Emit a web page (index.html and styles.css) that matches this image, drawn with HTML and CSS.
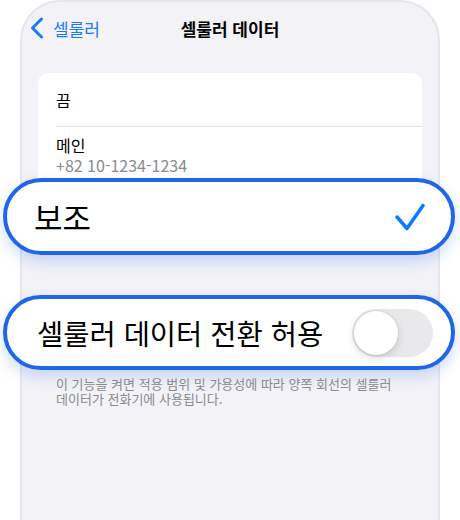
FILE: index.html
```html
<!DOCTYPE html>
<html lang="ko">
<head>
    <meta charset="UTF-8">
    <meta name="viewport" content="width=device-width, initial-scale=1.0">
    <title>셀룰러 데이터</title>
    <link rel="stylesheet" href="styles.css">
</head>
<body>
    <div class="phone">
        <div class="nav">
            <a class="back" href="#">
                <svg class="chevron" width="14" height="22" viewBox="0 0 14 22">
                    <polyline points="11.5,2 2.5,11 11.5,20" fill="none" stroke="#1a7cf5" stroke-width="3" stroke-linecap="round" stroke-linejoin="round"/>
                </svg>
                셀룰러
            </a>
            <div class="title">셀룰러 데이터</div>
            <div></div>
        </div>

        <div class="group">
            <div class="row">끔</div>
            <div class="row row-line">
                <div>메인</div>
                <div class="sub">+82 10-1234-1234</div>
            </div>
            <div class="pill pill-check">
                <span>보조</span>
                <svg width="30" height="28" viewBox="0 0 30 28">
                    <polyline points="2,14 12,25.5 28,2.5" fill="none" stroke="#0a7aff" stroke-width="3.5" stroke-linecap="round" stroke-linejoin="round"/>
                </svg>
            </div>
        </div>

        <div class="pill pill-switch">
            <span>셀룰러 데이터 전환 허용</span>
            <span class="toggle"><span class="knob"></span></span>
        </div>

        <p class="note">이 기능을 켜면 적용 범위 및 가용성에 따라 양쪽 회선의 셀룰러 데이터가 전화기에 사용됩니다.</p>
    </div>
</body>
</html>
```

FILE: styles.css
```css
html, body {
    margin: 0;
    overflow: hidden;
}

body {
    background: #fff;
    font-family: "Noto Sans CJK KR", "Noto Sans", sans-serif;
    color: #000;
}

.phone {
    box-sizing: border-box;
    width: 420px;
    min-height: 100vh;
    margin-left: 20px;
    background: #f2f2f7;
    border: 2px solid #e6e6ea;
    border-bottom: none;
    border-radius: 40px 40px 0 0;
}

.nav {
    display: grid;
    grid-template-columns: 1fr auto 1fr;
    align-items: center;
    height: 52px;
    padding: 0 8px;
}

.back {
    display: flex;
    align-items: center;
    gap: 9px;
    color: #1a7cf5;
    text-decoration: none;
    font-size: 17px;
}

.title {
    font-size: 17px;
    font-weight: 700;
}

.group {
    margin: 19px 16px 0;
    background: #fff;
    border-radius: 10px;
}

.row {
    display: flex;
    align-items: center;
    height: 53px;
    padding-left: 18px;
    font-size: 16px;
}

.row-line {
    display: block;
    height: auto;
    margin-left: 18px;
    padding: 8px 0 3px;
    padding-left: 0;
    border-top: 1px solid #e4e4e6;
    line-height: 20px;
}

.sub {
    color: #8a8a8e;
}

.pill {
    display: flex;
    align-items: center;
    justify-content: space-between;
    background: #fff;
    border: 4px solid #1f66e8;
    border-radius: 40px;
    box-shadow: 0 6px 14px rgba(31, 102, 232, 0.22);
}

.pill-check {
    height: 69px;
    margin: 0 -33px 0 -35px;
    padding: 0 26px 0 27px;
    font-size: 31px;
}

.pill-switch {
    height: 67px;
    margin: 40px -17px 0 -19px;
    padding: 0 18px 0 30px;
    font-size: 28.5px;
}

.toggle {
    display: flex;
    align-items: center;
    box-sizing: border-box;
    width: 81px;
    height: 48px;
    padding: 2px;
    background: #e9e9eb;
    border-radius: 24px;
}

.knob {
    width: 44px;
    height: 44px;
    background: #fff;
    border-radius: 50%;
    box-shadow: 0 3px 8px rgba(0, 0, 0, 0.15), 0 0 0 1px rgba(0, 0, 0, 0.04);
}

.note {
    margin: 6px 40px 0 34px;
    font-size: 13px;
    line-height: 15px;
    color: #8a8a8e;
}
```
